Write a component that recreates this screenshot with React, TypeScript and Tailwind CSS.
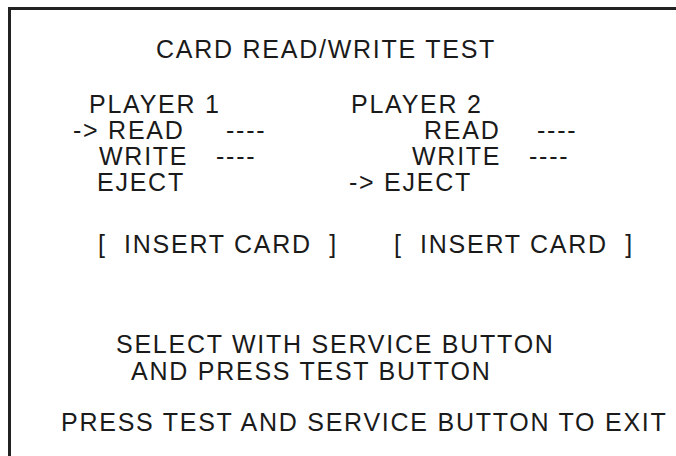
export default function App() {
  return (
    <div className="w-[676px] h-[456px] overflow-hidden bg-white">
      <div
        className="mt-[7px] ml-[8px] h-[460px] border-t-[3px] border-l-[3px] border-[#222] text-[25px] leading-[26px] tracking-[1.75px] text-[#1a1a1a] whitespace-pre"
        style={{ fontFamily: '"Liberation Sans", Arial, sans-serif' }}
      >
        <div className="mt-[26px] pl-[145px]">CARD READ/WRITE TEST</div>

        {/* player columns */}
        <div className="mt-[29px]">
          <div className="flex pl-[78px]">
            <span className="w-[262px] shrink-0">PLAYER 1</span>
            <span>PLAYER 2</span>
          </div>
          <div className="flex pl-[62px]">
            <span className="w-[153px] shrink-0">-&gt; READ</span>
            <span className="w-[198px] shrink-0">----</span>
            <span className="w-[113px] shrink-0">READ</span>
            <span>----</span>
          </div>
          <div className="flex pl-[88px]">
            <span className="w-[117px] shrink-0">WRITE</span>
            <span className="w-[196px] shrink-0">----</span>
            <span className="w-[117px] shrink-0">WRITE</span>
            <span>----</span>
          </div>
          <div className="flex pl-[86px]">
            <span className="w-[252px] shrink-0">EJECT</span>
            <span>-&gt; EJECT</span>
          </div>
        </div>

        <div className="flex mt-[36px] pl-[87px]">
          <span className="w-[296px] shrink-0">[  INSERT CARD  ]</span>
          <span>[  INSERT CARD  ]</span>
        </div>

        <div className="mt-[74px] pl-[105px]">SELECT WITH SERVICE BUTTON</div>
        <div className="mt-[1px] pl-[120px]">AND PRESS TEST BUTTON</div>

        <div className="mt-[25px] pl-[50px]">PRESS TEST AND SERVICE BUTTON TO EXIT</div>
      </div>
    </div>
  );
}
